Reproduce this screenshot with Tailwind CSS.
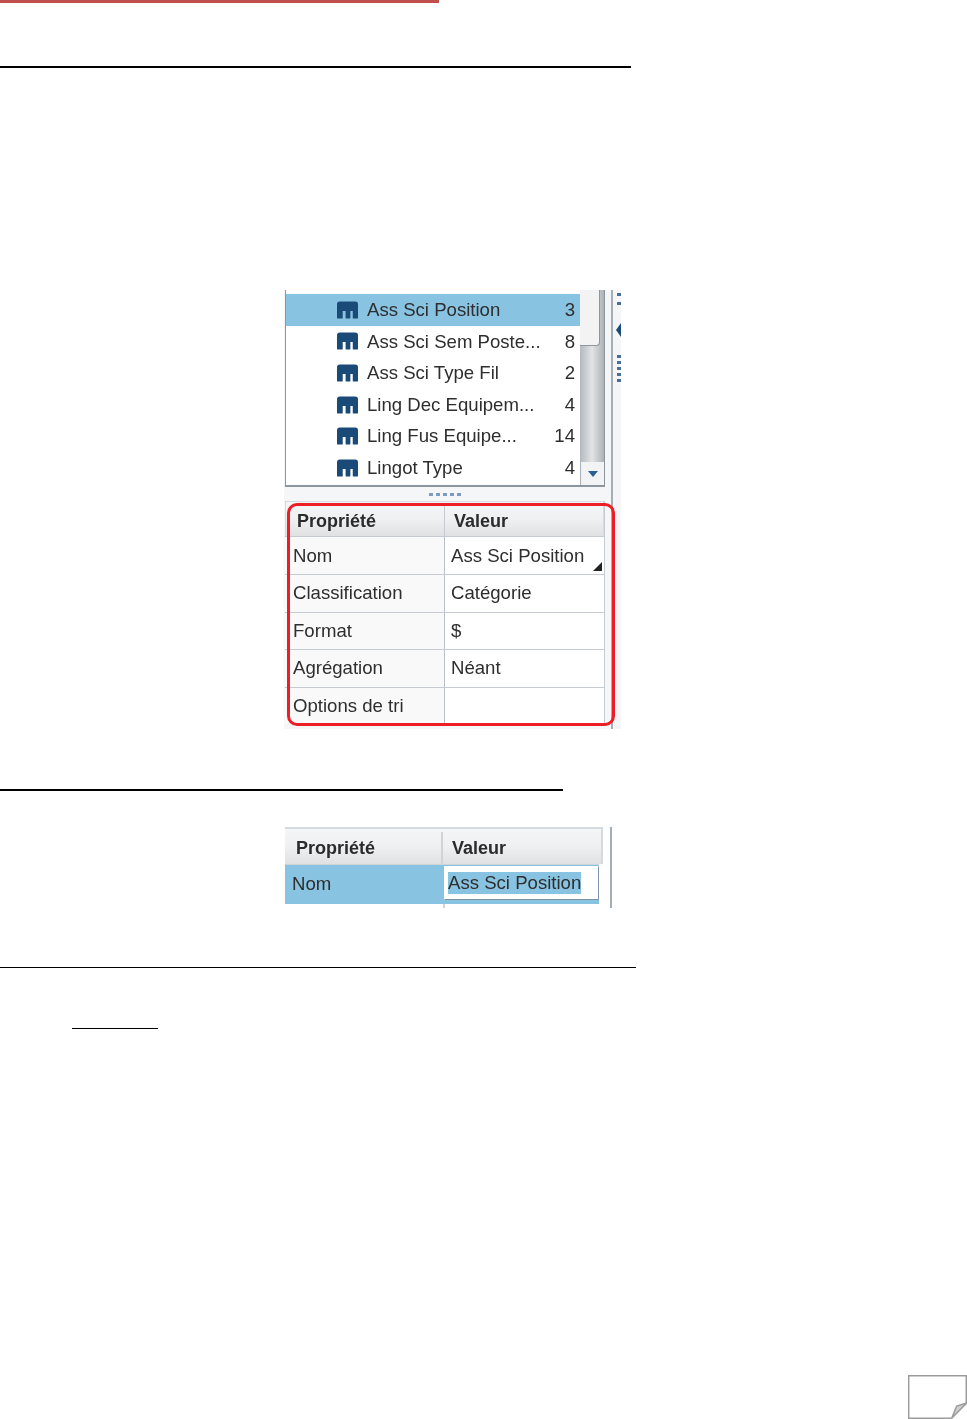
<!DOCTYPE html>
<html lang="fr">
<head>
    <meta charset="UTF-8">
    <title>Propriétés</title>
    <script src="https://cdn.jsdelivr.net/npm/@tailwindcss/browser@4"></script>
</head>
<body class="bg-white font-['Liberation_Sans',Arial,sans-serif] text-[#2e2e2e]">
<div class="relative h-[1419px] w-[967px] overflow-hidden">

    <!-- top rule -->
    <div class="h-[3px] w-[439px] bg-[#c0504d]"></div>
    <div class="mt-[63px] h-[2px] w-[631px] bg-black"></div>

    <!-- first figure: list + property table -->
    <div class="ml-[284px] mt-[222px] flex h-[439px] w-[337px] bg-[#f5f6f7] blur-[0.35px]">
        <div class="flex w-[329px] flex-col border-r-2 border-[#a5adb5]">
            <!-- list -->
            <div class="ml-px flex h-[197px] w-[320px] border-x border-b-2 border-[#8c969f] bg-white">
                <div class="w-[294px] pt-[4px] text-[18.6px] leading-[31.6px]">
                    <div class="flex h-[31.6px] items-center bg-[#89c3e2] pl-[51px] pr-[5px]">
                        <svg class="mr-[9px] h-[18px] w-[21px] shrink-0" viewBox="0 0 22 18"><path fill="#1a4a78" d="M3 0h16a3 3 0 0 1 3 3v14a1 1 0 0 1-1 1h-3.500a1 1 0 0 1-1-1v-7h-2.500v7a1 1 0 0 1-1 1h-3a1 1 0 0 1-1-1v-7H6v7a1 1 0 0 1-1 1H1a1 1 0 0 1-1-1V3a3 3 0 0 1 3-3z"/></svg>
                        <span class="flex-1">Ass Sci Position</span><span>3</span>
                    </div>
                    <div class="flex h-[31.6px] items-center pl-[51px] pr-[5px]">
                        <svg class="mr-[9px] h-[18px] w-[21px] shrink-0" viewBox="0 0 22 18"><path fill="#1a4a78" d="M3 0h16a3 3 0 0 1 3 3v14a1 1 0 0 1-1 1h-3.500a1 1 0 0 1-1-1v-7h-2.500v7a1 1 0 0 1-1 1h-3a1 1 0 0 1-1-1v-7H6v7a1 1 0 0 1-1 1H1a1 1 0 0 1-1-1V3a3 3 0 0 1 3-3z"/></svg>
                        <span class="flex-1">Ass Sci Sem Poste...</span><span>8</span>
                    </div>
                    <div class="flex h-[31.6px] items-center pl-[51px] pr-[5px]">
                        <svg class="mr-[9px] h-[18px] w-[21px] shrink-0" viewBox="0 0 22 18"><path fill="#1a4a78" d="M3 0h16a3 3 0 0 1 3 3v14a1 1 0 0 1-1 1h-3.500a1 1 0 0 1-1-1v-7h-2.500v7a1 1 0 0 1-1 1h-3a1 1 0 0 1-1-1v-7H6v7a1 1 0 0 1-1 1H1a1 1 0 0 1-1-1V3a3 3 0 0 1 3-3z"/></svg>
                        <span class="flex-1">Ass Sci Type Fil</span><span>2</span>
                    </div>
                    <div class="flex h-[31.6px] items-center pl-[51px] pr-[5px]">
                        <svg class="mr-[9px] h-[18px] w-[21px] shrink-0" viewBox="0 0 22 18"><path fill="#1a4a78" d="M3 0h16a3 3 0 0 1 3 3v14a1 1 0 0 1-1 1h-3.500a1 1 0 0 1-1-1v-7h-2.500v7a1 1 0 0 1-1 1h-3a1 1 0 0 1-1-1v-7H6v7a1 1 0 0 1-1 1H1a1 1 0 0 1-1-1V3a3 3 0 0 1 3-3z"/></svg>
                        <span class="flex-1">Ling Dec Equipem...</span><span>4</span>
                    </div>
                    <div class="flex h-[31.6px] items-center pl-[51px] pr-[5px]">
                        <svg class="mr-[9px] h-[18px] w-[21px] shrink-0" viewBox="0 0 22 18"><path fill="#1a4a78" d="M3 0h16a3 3 0 0 1 3 3v14a1 1 0 0 1-1 1h-3.500a1 1 0 0 1-1-1v-7h-2.500v7a1 1 0 0 1-1 1h-3a1 1 0 0 1-1-1v-7H6v7a1 1 0 0 1-1 1H1a1 1 0 0 1-1-1V3a3 3 0 0 1 3-3z"/></svg>
                        <span class="flex-1">Ling Fus Equipe...</span><span>14</span>
                    </div>
                    <div class="flex h-[31.6px] items-center pl-[51px] pr-[5px]">
                        <svg class="mr-[9px] h-[18px] w-[21px] shrink-0" viewBox="0 0 22 18"><path fill="#1a4a78" d="M3 0h16a3 3 0 0 1 3 3v14a1 1 0 0 1-1 1h-3.500a1 1 0 0 1-1-1v-7h-2.500v7a1 1 0 0 1-1 1h-3a1 1 0 0 1-1-1v-7H6v7a1 1 0 0 1-1 1H1a1 1 0 0 1-1-1V3a3 3 0 0 1 3-3z"/></svg>
                        <span class="flex-1">Lingot Type</span><span>4</span>
                    </div>
                </div>
                <!-- scrollbar -->
                <div class="flex w-[24px] flex-col bg-gradient-to-r from-[#b4b8bc] via-[#e2e4e6] to-[#aeb2b6]">
                    <div class="h-[56px] w-[20px] rounded-br-sm border-r border-b border-[#8c969f] bg-[#f3f3f3]"></div>
                    <div class="flex-1"></div>
                    <div class="flex h-[23px] items-center justify-center border-l border-[#aab1b8] bg-[#f2f3f4]">
                        <svg class="h-[6px] w-[10px]" viewBox="0 0 10 6"><path fill="#2a5f96" d="M0 0h10L5 6z"/></svg>
                    </div>
                </div>
            </div>
            <!-- splitter -->
            <div class="flex h-[14px] items-center justify-center gap-[3px] pr-[6px]">
                <i class="h-[3px] w-[4px] bg-[#7f9cbe]"></i><i class="h-[3px] w-[4px] bg-[#7f9cbe]"></i><i class="h-[3px] w-[4px] bg-[#7f9cbe]"></i><i class="h-[3px] w-[4px] bg-[#7f9cbe]"></i><i class="h-[3px] w-[4px] bg-[#7f9cbe]"></i>
            </div>
            <!-- property table -->
            <div class="relative ml-px w-[320px] border-r border-[#c5cbd1] text-[18.6px]">
                <div class="flex h-[35px] border-x border-t border-[#d5dade] bg-gradient-to-b from-[#f4f5f6] via-[#eff0f1] to-[#dfe1e3] pt-[4px] font-bold text-[#2b2b2b]">
                    <div class="flex w-[159px] items-center border-r border-[#c5cbd1] pl-[11px] text-[18px]">Propriété</div>
                    <div class="flex flex-1 items-center pl-[9px] text-[18px]">Valeur</div>
                </div>
                <div class="flex h-[38px] border-t border-[#c5cbd1]">
                    <div class="flex w-[160px] items-center border-r border-[#b8c0c8] bg-[#f9f9f9] pl-[8px]">Nom</div>
                    <div class="relative flex flex-1 items-center bg-white pl-[6px]">Ass Sci Position
                        <span class="absolute right-[2px] bottom-[3px] h-0 w-0 border-b-[9px] border-l-[9px] border-b-[#222] border-l-transparent"></span>
                    </div>
                </div>
                <div class="flex h-[37.5px] border-t border-[#c5cbd1]">
                    <div class="flex w-[160px] items-center border-r border-[#b8c0c8] bg-[#f9f9f9] pl-[8px]">Classification</div>
                    <div class="flex flex-1 items-center bg-white pl-[6px]">Catégorie</div>
                </div>
                <div class="flex h-[37.5px] border-t border-[#c5cbd1]">
                    <div class="flex w-[160px] items-center border-r border-[#b8c0c8] bg-[#f9f9f9] pl-[8px]">Format</div>
                    <div class="flex flex-1 items-center bg-white pl-[6px]">$</div>
                </div>
                <div class="flex h-[37.5px] border-t border-[#c5cbd1]">
                    <div class="flex w-[160px] items-center border-r border-[#b8c0c8] bg-[#f9f9f9] pl-[8px]">Agrégation</div>
                    <div class="flex flex-1 items-center bg-white pl-[6px]">Néant</div>
                </div>
                <div class="flex h-[37.5px] border-t border-[#c5cbd1]">
                    <div class="flex w-[160px] items-center border-r border-[#b8c0c8] bg-[#f9f9f9] pl-[8px]">Options de tri</div>
                    <div class="flex-1 bg-white"></div>
                </div>
                <!-- red highlight -->
                <div class="absolute top-[2px] left-[2px] h-[223px] w-[328px] rounded-[10px] border-[3px] border-[#ee1c25]"></div>
            </div>
        </div>
        <!-- right grip strip -->
        <div class="flex flex-1 flex-col items-end pt-[3px]">
            <i class="mb-[6px] h-[3px] w-[4px] bg-[#4a6f94]"></i>
            <i class="mb-[18px] h-[3px] w-[4px] bg-[#4a6f94]"></i>
            <svg class="mb-[18px] h-[14px] w-[5px]" viewBox="0 0 5 14"><path fill="#1a4a78" d="M5 0v14L0 7z"/></svg>
            <i class="mb-[3px] h-[3px] w-[4px] bg-[#4a6f94]"></i>
            <i class="mb-[3px] h-[3px] w-[4px] bg-[#4a6f94]"></i>
            <i class="mb-[3px] h-[3px] w-[4px] bg-[#4a6f94]"></i>
            <i class="mb-[3px] h-[3px] w-[4px] bg-[#4a6f94]"></i>
            <i class="h-[3px] w-[4px] bg-[#4a6f94]"></i>
        </div>
    </div>

    <div class="mt-[60px] h-[2px] w-[563px] bg-black"></div>

    <!-- second figure: editing a cell -->
    <div class="ml-[285px] mt-[36px] flex h-[81px] w-[327px] border-r-2 border-[#a5adb5] text-[18.6px] blur-[0.35px]">
        <div class="w-[318px]">
            <div class="flex h-[37px] border-t-2 border-r-2 border-[#d5dade] bg-gradient-to-b from-[#f4f5f6] via-[#eff0f1] to-[#dfe1e3] pt-[3px] font-bold text-[#2b2b2b]">
                <div class="flex w-[158px] items-center border-r-2 border-[#cfd4d9] pl-[11px] text-[18px]">Propriété</div>
                <div class="flex flex-1 items-center pl-[9px] text-[18px]">Valeur</div>
            </div>
            <div class="flex h-[40px] w-[314px] border-t border-[#cfd4d9] bg-[#89c3e2] pt-[1px] pb-[3px]">
                <div class="flex w-[159px] items-center pl-[7px]">Nom</div>
                <div class="flex h-[34px] w-[155px] items-center border border-r-[#7f93a8] border-b-[#7f93a8] border-l-white border-t-white bg-white pl-[3px]">
                    <span class="bg-[#89c3e2] leading-[22px]">Ass Sci Position</span>
                </div>
            </div>
            <div class="ml-[158px] h-[4px] w-[2px] bg-[#cfd4d9]"></div>
        </div>
    </div>

    <div class="mt-[59px] h-px w-[636px] bg-black"></div>
    <div class="ml-[72px] mt-[60px] h-px w-[86px] bg-black"></div>

    <!-- folded page corner -->
    <svg class="absolute left-[908px] top-[1375px] h-[44px] w-[59px]" viewBox="0 0 59 44">
        <path fill="none" stroke="#9b9b9b" stroke-width="1.500" d="M59 .7H.7v42.600h43"/>
        <path fill="#cfcfcf" stroke="#9b9b9b" stroke-width="1.500" d="M43.700 43.300l15-15.300-10 3z"/>
        <path fill="none" stroke="#9b9b9b" stroke-width="1.500" d="M58.300 .7V28"/>
    </svg>
</div>
</body>
</html>
